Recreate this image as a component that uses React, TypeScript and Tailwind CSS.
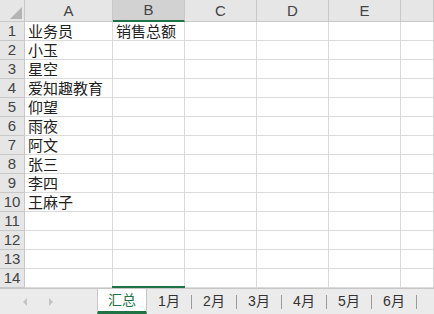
import React from 'react'

const cols = ['A', 'B', 'C', 'D', 'E', '']
const widths = ['w-[88px]', 'w-[72px]', 'w-[72px]', 'w-[72px]', 'w-[72px]', 'flex-1']
const names = ['业务员', '小玉', '星空', '爱知趣教育', '仰望', '雨夜', '阿文', '张三', '李四', '王麻子', '', '', '', '']
const tabs = ['1月', '2月', '3月', '4月', '5月', '6月']

const font = { fontFamily: '"Liberation Sans", "Noto Sans CJK SC", sans-serif' }

export default function App() {
  return (
    <div className="relative flex h-[314px] w-[434px] flex-col overflow-hidden bg-white text-[#222]" style={font}>
      {/* column headers */}
      <div className="flex h-[22px] shrink-0">
        <div className="relative w-[25px] border-r border-b border-[#c8c8c8] bg-[#e6e6e6]">
          <div className="absolute right-[2px] bottom-[2px] h-0 w-0 border-b-[12px] border-l-[12px] border-b-[#b4b4b4] border-l-transparent" />
        </div>
        {cols.map((c, i) => (
          <div
            key={i}
            className={`${widths[i]} flex items-center justify-center border-r pt-[1px] text-[15px] text-[#444] ${
              c === 'B'
                ? 'border-b-2 border-r-[#c8c8c8] border-b-[#217346] bg-[#d2d2d2]'
                : 'border-b border-[#c8c8c8] bg-[#e6e6e6]'
            }`}
          >
            {c}
          </div>
        ))}
      </div>

      {/* rows */}
      <div className="flex-1 overflow-hidden">
        {names.map((n, r) => (
          <div key={r} className="flex h-[19px]">
            <div className="flex w-[25px] items-center justify-center border-r border-b border-[#c8c8c8] bg-[#e6e6e6] pt-[1px] text-[15px] text-[#444]">
              {r + 1}
            </div>
            {cols.map((_, i) => (
              <div
                key={i}
                className={`${widths[i]} flex items-center overflow-visible whitespace-nowrap border-r border-b border-[#dadada] pt-[1px] pl-[3px] text-[15px] leading-none`}
              >
                {i === 0 ? n : i === 1 && r === 0 ? '销售总额' : ''}
              </div>
            ))}
          </div>
        ))}
      </div>

      {/* selection edge under column B */}
      <div className="absolute top-[286px] left-[112px] h-[2px] w-[73px] bg-[#217346]" />

      {/* sheet tabs */}
      <div className="flex h-[26px] shrink-0 items-stretch border-t border-[#c6c6c6] bg-[#ebebeb]">
        <div className="flex w-[97px] items-center gap-[22px] pl-[23px]">
          <span className="h-0 w-0 border-y-[4px] border-r-[4px] border-y-transparent border-r-[#c4c4c4]" />
          <span className="h-0 w-0 border-y-[4px] border-l-[4px] border-y-transparent border-l-[#c4c4c4]" />
        </div>
        <div className="flex w-[50px] items-center justify-center border-x border-b-[3px] border-x-[#c6c6c6] border-b-[#217346] bg-white text-[14px] text-[#217346]">
          汇总
        </div>
        {tabs.map((t) => (
          <div key={t} className="flex w-[45px] items-center">
            <span className="flex-1 text-center text-[14px] text-[#333]">{t}</span>
            <span className="h-[14px] w-px bg-[#9a9a9a]" />
          </div>
        ))}
      </div>
    </div>
  )
}
